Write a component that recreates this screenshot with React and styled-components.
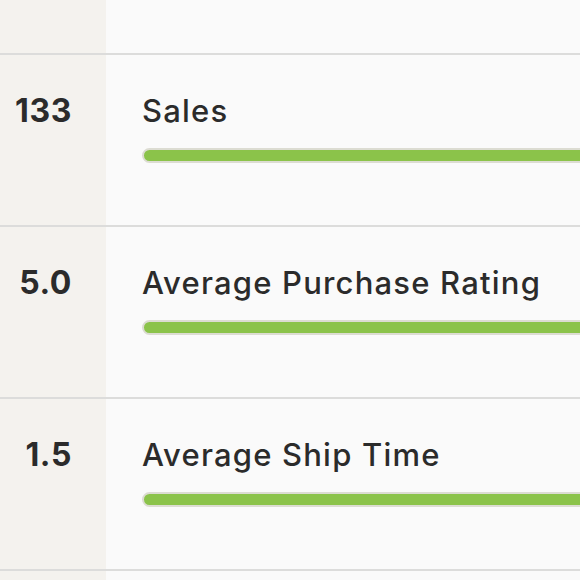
import React from "react"
import styled, { createGlobalStyle } from "styled-components"

const GlobalStyle = createGlobalStyle`
  html, body {
    margin: 0;
    padding: 0;
    background: #fafafa;
  }
  body {
    font-family: Inter, "Open Sans", "Liberation Sans", sans-serif;
    color: #2b2b2b;
    overflow: hidden;
  }
`

const Table = styled.div`
  width: 580px;
  height: 580px;
  overflow: hidden;
  background: #fafafa;
`

const Row = styled.div`
  display: flex;
  height: ${(props) => props.height}px;
  border-top: ${(props) => (props.first ? "none" : "2px solid #dcdcdb")};
`

const ValueCell = styled.div`
  width: 106px;
  flex-shrink: 0;
  background: #f4f2ee;
  box-sizing: border-box;
  padding: 36px 34px 0 0;
  text-align: right;
  font-size: 32px;
  font-weight: 700;
  letter-spacing: 0.6px;
  line-height: 40px;
`

const InfoCell = styled.div`
  flex: 1;
  padding: 36px 0 0 142px;
  margin-left: -106px;
  min-width: 0;
`

const Label = styled.div`
  font-size: 31px;
  font-weight: 500;
  line-height: 40px;
  letter-spacing: 1.2px;
  white-space: nowrap;
`

const Track = styled.div`
  margin-top: 17px;
  height: 11px;
  margin-right: -20px;
  border: 2px solid #dcdcd2;
  border-radius: 8px;
  background: #8bc34a;
`

const stats = [
  { value: "133", label: "Sales" },
  { value: "5.0", label: "Average Purchase Rating" },
  { value: "1.5", label: "Average Ship Time" },
]

const App = () => {
  return (
    <Table>
      <GlobalStyle />
      <Row first height={53}>
        <ValueCell />
        <InfoCell />
      </Row>
      {stats.map((item) => (
        <Row key={item.label} height={170}>
          <ValueCell>{item.value}</ValueCell>
          <InfoCell>
            <Label>{item.label}</Label>
            <Track />
          </InfoCell>
        </Row>
      ))}
      <Row height={20}>
        <ValueCell />
        <InfoCell />
      </Row>
    </Table>
  )
}

export default App
